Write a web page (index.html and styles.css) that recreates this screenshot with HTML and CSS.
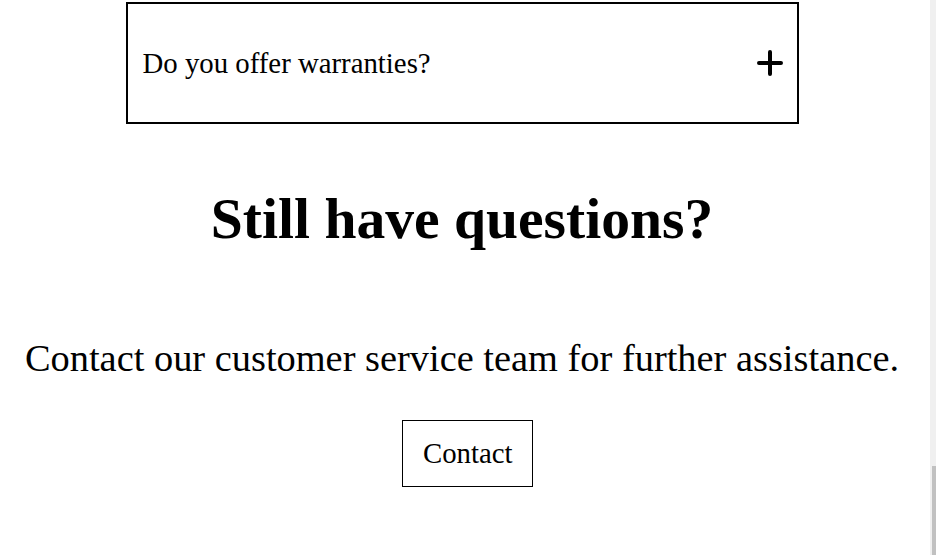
FILE: index.html
```html
<!DOCTYPE html>
<html lang="en">
<head>
<meta charset="utf-8">
<title>FAQ</title>
<link rel="stylesheet" href="styles.css">
</head>
<body>
<div class="page">
  <main class="content">
    <div class="faq-item">
      <span class="faq-question">Do you offer warranties?</span>
      <svg class="faq-icon" width="28" height="28" viewBox="0 0 28 28" aria-hidden="true">
        <path d="M14 3V25M3 14H25" fill="none" stroke="#000" stroke-width="4" stroke-linecap="round"/>
      </svg>
    </div>
    <h2 class="cta-title">Still have questions?</h2>
    <p class="cta-text">Contact our customer service team for further assistance.</p>
    <a class="cta-button" href="#">Contact</a>
  </main>
</div>
<div class="scrollbar" aria-hidden="true"><div class="scrollbar-thumb"></div></div>
</body>
</html>
```
FILE: styles.css
```css
html, body {
  margin: 0;
  padding: 0;
  background: #fff;
  color: #000;
  font-family: "Liberation Serif", "Times New Roman", serif;
  overflow: hidden;
}

.page {
  width: 936px;
  height: 555px;
  padding-right: 12px;
  box-sizing: border-box;
}

.content {
  display: flex;
  flex-direction: column;
  align-items: center;
}

.faq-item {
  margin-top: 2px;
  width: 673px;
  height: 122px;
  box-sizing: border-box;
  border: 2px solid #000;
  padding: 0 13px 0 15px;
  display: flex;
  align-items: center;
  justify-content: space-between;
}

.faq-question {
  font-size: 28.8px;
  line-height: 33px;
}

.faq-icon {
  display: block;
  flex: none;
}

.cta-title {
  margin: 62px 0 0;
  font-size: 57.6px;
  line-height: 66px;
  font-weight: 700;
}

.cta-text {
  margin: 84px 0 0;
  font-size: 38.4px;
  line-height: 44px;
}

.cta-button {
  margin: 40px 0 0 11px;
  display: block;
  box-sizing: border-box;
  height: 67px;
  padding: 16px 19.5px 16px 20px;
  border: 1px solid #000;
  font-size: 28.8px;
  line-height: 33px;
  color: #000;
  text-decoration: none;
}

.scrollbar {
  position: fixed;
  top: 0;
  right: 0;
  width: 6px;
  height: 555px;
  background: #f0f0f0;
}

.scrollbar-thumb {
  position: absolute;
  right: 0;
  bottom: 0;
  width: 4px;
  height: 89px;
  background: #c1c1c1;
}
```
